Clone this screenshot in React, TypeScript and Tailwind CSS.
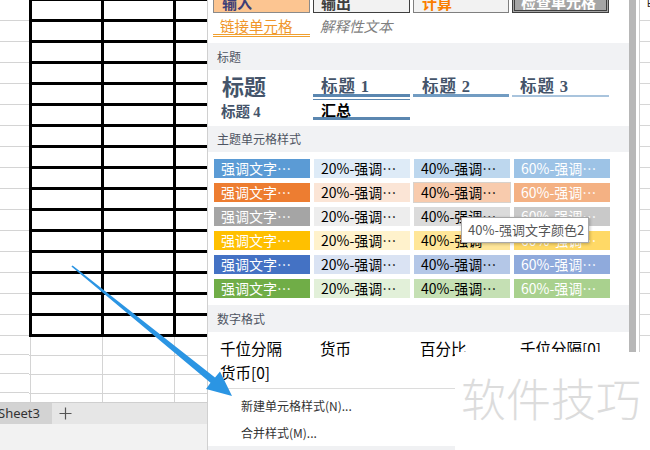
import React from 'react';

const accents = [
  ['#5b9bd5', '#deebf7', '#bdd7ee', '#9dc3e6'],
  ['#ed7d31', '#fbe5d6', '#f8cbad', '#f4b183'],
  ['#a5a5a5', '#ededed', '#dbdbdb', '#c9c9c9'],
  ['#ffc000', '#fff2cc', '#ffe699', '#ffd966'],
  ['#4472c4', '#dae3f3', '#b4c7e7', '#8faadc'],
  ['#70ad47', '#e2f0d9', '#c5e0b4', '#a9d18e'],
];

const labels = ['强调文字…', '20%-强调…', '40%-强调…', '60%-强调…'];
const textColors = ['text-white', 'text-black', 'text-black', 'text-white'];

function Sheet() {
  const tableRows = Array.from({ length: 16 });
  return (
    <div className="w-[207px] shrink-0 flex flex-col h-full">
      <div className="h-[402px] flex overflow-hidden">
        {/* row header strip */}
        <div className="w-[29px] shrink-0 flex flex-col">
          {tableRows.map((_, i) => (
            <div key={i} className="h-[21px] shrink-0 border-b border-[#d4d4d4]" />
          ))}
          {[0, 1, 2, 3].map((i) => (
            <div key={i} className="h-[19px] shrink-0 border-b border-[#d4d4d4]" />
          ))}
        </div>
        {/* bordered table + plain cells below */}
        <div className="flex-1 flex flex-col min-w-0">
          <div className="mt-[-2px] border-t-[3px] border-l-[3px] border-black flex flex-col w-[260px]">
            {tableRows.map((_, i) => (
              <div key={i} className="h-[21px] shrink-0 flex border-b-[3px] border-black">
                <div className="w-[72px] shrink-0 border-r-[3px] border-black" />
                <div className="w-[72px] shrink-0 border-r-[3px] border-black" />
                <div className="w-[72px] shrink-0 border-r-[3px] border-black" />
              </div>
            ))}
          </div>
          {[0, 1, 2, 3].map((i) => (
            <div key={i} className="h-[19px] shrink-0 flex pl-[1px] border-b border-[#d4d4d4]">
              <div className="w-[72px] shrink-0 border-l border-[#d4d4d4]" />
              <div className="w-[72px] shrink-0 border-l border-[#d4d4d4]" />
              <div className="w-[72px] shrink-0 border-l border-[#d4d4d4]" />
            </div>
          ))}
        </div>
      </div>
      {/* sheet tabs */}
      <div className="h-[22px] shrink-0 flex items-center bg-[#e6e6e6] border-t border-[#cfcfcf]">
        <div className="w-[52px] h-full bg-[#d3d3d3] flex items-center">
          <span className="ml-[-2px] text-[13px] text-[#333] font-['Noto_Sans',sans-serif]">Sheet3</span>
        </div>
        <svg className="ml-[7px]" width="13" height="13" viewBox="0 0 13 13">
          <path d="M6.5 0.5v12M0.5 6.5h12" stroke="#555" strokeWidth="1.2" fill="none" />
        </svg>
      </div>
      <div className="flex-1 bg-[#f2f2f2]" />
    </div>
  );
}

function SectionHeader({ title, h }: { title: string; h: string }) {
  return (
    <div className={`${h} shrink-0 bg-[#f1f2f4] pl-[9px] flex items-center text-[12px] text-[#4e5462]`}>
      {title}
    </div>
  );
}

function Panel() {
  return (
    <div className="w-[422px] shrink-0 h-full flex flex-col bg-white border-l border-[#d0d0d0] overflow-hidden">
      {/* top styles row (cut off) */}
      <div className="mt-[-11px] h-[24px] shrink-0 flex gap-[3px] pl-[5px] text-[15px] font-bold leading-[15px]">
        <div className="w-[97px] h-full bg-[#fcc591] border border-[#8a8a8a] flex items-end pb-[2px] pl-[8px] text-[#3f3f76]">输入</div>
        <div className="w-[97px] h-full bg-[#f2f2f2] border border-[#3f3f3f] flex items-end pb-[2px] pl-[7px] text-[#3f3f3f]">输出</div>
        <div className="w-[96px] h-full bg-[#f2f2f2] border border-[#7f7f7f] flex items-end pb-[2px] pl-[8px] text-[#fa7d00]">计算</div>
        <div className="w-[97px] h-full bg-[#a5a5a5] border-[3px] border-double border-[#3f3f3f] flex items-end pb-[1px] pl-[6px] text-white">检查单元格</div>
      </div>
      {/* link / explanatory */}
      <div className="h-[30px] shrink-0 flex gap-[3px] pl-[5px] text-[14.5px]">
        <div className="w-[97px] h-[24px] border-b-[3px] border-double border-[#f0a030] pt-[5px] pl-[7px] leading-[16px] text-[#f0962a]">链接单元格</div>
        <div className="w-[97px] h-[24px] pt-[5px] pl-[7px] leading-[16px] italic text-[#7f7f7f]">解释性文本</div>
      </div>
      <SectionHeader title="标题" h="h-[27px]" />
      {/* headings */}
      <div className="h-[56px] shrink-0 flex flex-col">
        <div className="h-[27px] flex gap-[3px] pl-[5px] font-bold text-[#44546a]">
          <div className="w-[97px] pt-[4px] pl-[9px] text-[22px] leading-[22px]">标题</div>
          <div className="w-[97px] border-b-[3px] border-[#5b87b0] pt-[7px] pl-[8px] text-[16.5px] leading-[17px] tracking-[1px]">标题 <span className="font-['Liberation_Serif',serif]">1</span></div>
          <div className="w-[96px] border-b-[3px] border-[#729cc2] pt-[7px] pl-[9px] text-[16.5px] leading-[17px] tracking-[1px]">标题 <span className="font-['Liberation_Serif',serif]">2</span></div>
          <div className="w-[97px] border-b-2 border-[#a9c4dd] pt-[7px] pl-[8px] text-[16.5px] leading-[17px] tracking-[1px]">标题 <span className="font-['Liberation_Serif',serif]">3</span></div>
        </div>
        <div className="h-[29px] flex gap-[3px] pl-[5px] font-bold">
          <div className="w-[97px] pt-[6px] pl-[8px] text-[14.5px] leading-[15px] text-[#44546a]">标题 <span className="font-['Liberation_Serif',serif]">4</span></div>
          <div className="w-[97px] mt-[2px] h-[21px] border-t border-b-[3px] border-b-double border-[#5b87b0] pt-[2px] pl-[8px] text-[15px] leading-[15px] text-black">汇总</div>
        </div>
      </div>
      <SectionHeader title="主题单元格样式" h="h-[26px]" />
      {/* accent grid */}
      <div className="shrink-0 py-[7px] pl-[6px]">
        <div className="grid grid-cols-[96px_96px_96px_96px] gap-x-[4px] gap-y-[5px]">
          {accents.map((row, r) =>
            row.map((c, i) => (
              <div
                key={`${r}-${i}`}
                className={`h-[19px] pl-[7px] text-[14px] leading-[19px] ${textColors[i]} ${r === 1 && i === 2 ? 'outline outline-[#d8d2cc]' : ''}`}
                style={{ backgroundColor: c }}
              >
                {labels[i]}
              </div>
            ))
          )}
        </div>
      </div>
      <SectionHeader title="数字格式" h="h-[27px]" />
      {/* number formats */}
      <div className="shrink-0 pt-[4px] pl-[12px] grid grid-cols-[100px_100px_100px_100px] text-[15.5px] leading-[24px] text-black">
        <div>千位分隔</div>
        <div>货币</div>
        <div>百分比</div>
        <div>千位分隔[0]</div>
        <div>货币[0]</div>
      </div>
      <div className="mt-[4px] border-t border-[#dcdcdc] shrink-0 pt-[3px] text-[12px] text-[#333]">
        <div className="h-[27px] leading-[27px] pl-[33px]">新建单元格样式(N)...</div>
        <div className="h-[27px] leading-[27px] pl-[33px]">合并样式(M)...</div>
      </div>
      <div className="flex-1 bg-[#f0f1f3]" />
    </div>
  );
}

function RightEdge() {
  return (
    <div className="flex h-full">
      <div className="w-[7px] h-[352px] bg-[#b7b7b7]" />
      <div className="ml-[3px] w-[11px] h-[352px] border-l border-[#cfcfcf] flex flex-col overflow-hidden">
        <div className="h-[21px] shrink-0 border-b border-[#d6d6d6] pl-[7px] text-[10px] leading-[8px] text-[#222] font-['Liberation_Sans',sans-serif]">E</div>
        {Array.from({ length: 16 }).map((_, i) => (
          <div key={i} className="h-[21px] shrink-0 border-b border-[#d6d6d6]" />
        ))}
      </div>
    </div>
  );
}

export default function App() {
  return (
    <div className="relative w-[650px] h-[450px] overflow-hidden bg-white flex font-['Noto_Sans_CJK_SC',sans-serif]">
      <Sheet />
      <Panel />
      <RightEdge />

      {/* hover tooltip */}
      <div className="absolute left-[461px] top-[217px] w-[128px] h-[26px] bg-white border border-[#a8a8a8] shadow-[1px_1px_3px_rgba(0,0,0,0.25)] pl-[6px] text-[13px] leading-[24px] text-[#555]">
        40%-强调文字颜色2
      </div>

      {/* watermark */}
      <div className="absolute left-[455px] top-[352px] right-0 bottom-0 bg-white pl-[6px] pt-[20px]">
        <div className="text-[45px] leading-[52px] font-light text-[#dcdcdc] whitespace-nowrap">软件技巧</div>
      </div>

      {/* pointer arrow */}
      <svg className="absolute inset-0 pointer-events-none" width="650" height="450" viewBox="0 0 650 450">
        <polygon
          points="71.4,266.6 72.6,265.4 215,377.5 220,371.5 232,396 206,389 210.5,382.8"
          fill="#2b95e3"
        />
      </svg>
    </div>
  );
}
